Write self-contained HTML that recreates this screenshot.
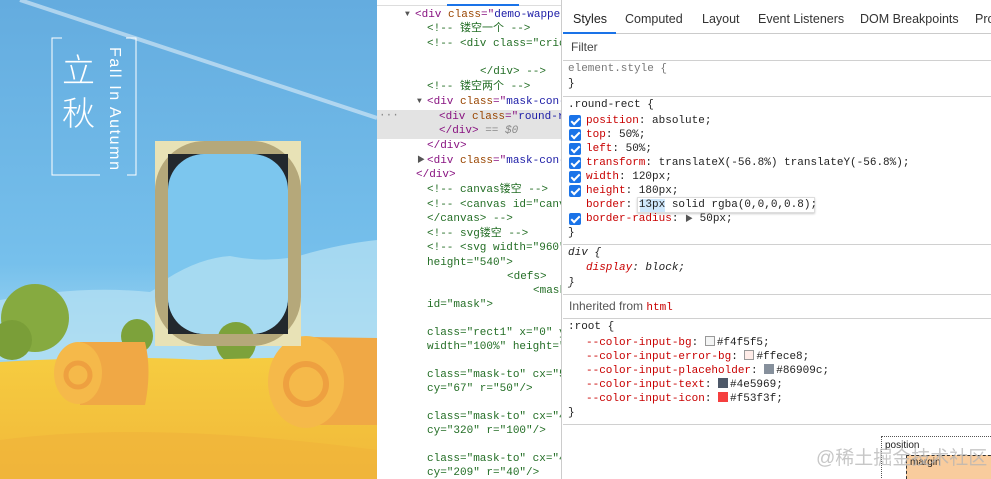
<!DOCTYPE html>
<html><head><meta charset="utf-8">
<style>
*{margin:0;padding:0;box-sizing:border-box}
body{width:991px;height:479px;overflow:hidden;background:#fff;position:relative;font-family:"Liberation Sans","Noto Sans CJK SC",sans-serif}
.mono{font-family:"Liberation Mono","Noto Sans CJK SC",monospace;font-size:11px}
#dom{position:absolute;left:377px;top:0;width:185px;height:479px;background:#fff;overflow:hidden;border-right:1px solid #ccc}
#dom .l{position:absolute;white-space:pre;line-height:14px;color:#236e25}
.tg{color:#881280}.at{color:#994500}.av{color:#1a1aa6}.cm{color:#236e25}
#sty{position:absolute;left:563px;top:0;width:428px;height:479px;background:#fff;overflow:hidden}
.tabs{position:absolute;top:6px;left:0;right:0;height:28px;border-bottom:1px solid #cbcbcb;font-size:12.5px;color:#333}
.tabs span{position:absolute;top:6px}
.sep{position:absolute;left:0;right:0;height:1px;background:#d0d0d0}
.sl{position:absolute;white-space:pre;line-height:14px;color:#222}
.p{color:#c80000}
.cb{position:absolute;left:6px;width:12px;height:12px;background:#1a73e8;border-radius:2px}
.cb:after{content:"";position:absolute;left:4px;top:1px;width:3px;height:7px;border:solid #fff;border-width:0 2px 2px 0;transform:rotate(45deg)}
.sw{display:inline-block;width:10px;height:10px;border:1px solid #999;vertical-align:-1px;margin-right:2px}
</style></head><body>
<svg width="377" height="479" style="position:absolute;left:0;top:0" viewBox="0 0 377 479">
<defs>
<linearGradient id="sky" x1="0" y1="0" x2="0" y2="1"><stop offset="0" stop-color="#64acdf"/><stop offset="0.55" stop-color="#76c0ec"/><stop offset="0.7" stop-color="#9ad4f0"/></linearGradient>
<linearGradient id="fld" x1="0" y1="0" x2="0" y2="1"><stop offset="0" stop-color="#f6cc40"/><stop offset="1" stop-color="#f1b83a"/></linearGradient>
<clipPath id="win"><rect x="168" y="154" width="120" height="180" rx="36"/></clipPath>
</defs>
<rect width="377" height="479" fill="url(#sky)"/>
<path d="M20 0 L377 118" stroke="#e0eef8" stroke-width="4" opacity=".6"/>
<path d="M0 300 Q80 285 150 292 Q220 250 280 262 Q330 245 377 240 L377 360 L0 360Z" fill="#b2dff2" opacity=".8"/>
<ellipse cx="35" cy="318" rx="34" ry="34" fill="#86aa40"/>
<ellipse cx="12" cy="340" rx="20" ry="20" fill="#7a9e38"/>
<ellipse cx="137" cy="336" rx="16" ry="17" fill="#7da23b"/>
<ellipse cx="236" cy="342" rx="20" ry="22" fill="#7da23b"/>
<path d="M0 362 Q120 355 200 360 Q300 356 377 358 L377 479 L0 479Z" fill="url(#fld)"/>
<path d="M0 440 Q150 420 377 450 L377 479 L0 479Z" fill="#f0b23a" opacity=".6"/>
<path d="M80 342 L145 342 Q152 370 145 405 L80 405Z" fill="#f0a845"/>
<ellipse cx="78" cy="373" rx="24" ry="31" fill="#f5b94a"/>
<circle cx="78" cy="375" r="12" fill="none" stroke="#eea040" stroke-width="5"/>
<path d="M310 337 L377 338 L377 425 L310 425Z" fill="#f0a845"/>
<ellipse cx="306" cy="382" rx="38" ry="46" fill="#f5b94a"/>
<circle cx="306" cy="384" r="20" fill="none" stroke="#eea040" stroke-width="6"/>
<rect x="155" y="141" width="146" height="205" fill="#e8e2b6"/>
<rect x="161.5" y="147.5" width="133" height="192" rx="43" fill="none" stroke="#b5a87a" stroke-width="13"/>
<rect x="168" y="154" width="120" height="180" fill="#23282d"/>
<g clip-path="url(#win)">
<rect x="168" y="154" width="120" height="180" fill="#7cc6ee"/>
<path d="M168 278 Q200 258 230 256 Q260 262 288 258 L288 334 L168 334Z" fill="#abdcf1" opacity=".9"/>
<ellipse cx="236" cy="338" rx="18" ry="16" fill="#7da23b"/>
</g>
<polyline points="62,38 52,38 52,175 100,175" fill="none" stroke="#fff" stroke-width="1"/>
<polyline points="126,38 136,38 136,175 127,175" fill="none" stroke="#fff" stroke-width="1"/>
<text x="62" y="82" font-size="33" fill="#fff" font-family="Noto Sans CJK SC,sans-serif" font-weight="300">立</text>
<text x="62" y="125" font-size="33" fill="#fff" font-family="Noto Sans CJK SC,sans-serif" font-weight="300">秋</text>
<text transform="translate(110,47) rotate(90)" font-size="16" fill="#fff" font-family="Liberation Sans,sans-serif" textLength="123" lengthAdjust="spacing">Fall In Autumn</text>
</svg>
<div id="dom" class="mono">
<div style="position:absolute;left:0;top:0;right:0;height:6px;border-bottom:1px solid #ddd"></div>
<div style="position:absolute;left:70px;top:4px;width:72px;height:2px;background:#1a73e8"></div>
<div style="position:absolute;left:0;top:110px;width:185px;height:29px;background:#e3e3e3"></div>
<div class="l" style="left:28px;top:8px;color:#555;font-size:8px">▼</div>
<div class="l" style="left:38px;top:8px"><span class="tg">&lt;div </span><span class="at">class</span><span class="tg">="</span><span class="av">demo-wappe</span></div>
<div class="l" style="left:50px;top:22px">&lt;!-- 镂空一个 --&gt;</div>
<div class="l" style="left:50px;top:37px">&lt;!-- &lt;div class="cric</div>
<div class="l" style="left:103px;top:65px">&lt;/div&gt; --&gt;</div>
<div class="l" style="left:50px;top:80px">&lt;!-- 镂空两个 --&gt;</div>
<div class="l" style="left:40px;top:95px;color:#555;font-size:8px">▼</div>
<div class="l" style="left:50px;top:95px"><span class="tg">&lt;div </span><span class="at">class</span><span class="tg">="</span><span class="av">mask-con-</span></div>
<div class="l" style="left:2px;top:109px;color:#888">···</div>
<div class="l" style="left:62px;top:110px"><span class="tg">&lt;div </span><span class="at">class</span><span class="tg">="</span><span class="av">round-r</span></div>
<div class="l" style="left:62px;top:124px"><span class="tg">&lt;/div&gt;</span><span style="color:#888"> == <i>$0</i></span></div>
<div class="l" style="left:50px;top:139px"><span class="tg">&lt;/div&gt;</span></div>
<div class="l" style="left:40px;top:154px;color:#555;font-size:8px">▶</div>
<div class="l" style="left:50px;top:154px"><span class="tg">&lt;div </span><span class="at">class</span><span class="tg">="</span><span class="av">mask-con-</span></div>
<div class="l" style="left:39px;top:168px"><span class="tg">&lt;/div&gt;</span></div>
<div class="l" style="left:50px;top:183px">&lt;!-- canvas镂空 --&gt;</div>
<div class="l" style="left:50px;top:198px">&lt;!-- &lt;canvas id="canv</div>
<div class="l" style="left:50px;top:212px">&lt;/canvas&gt; --&gt;</div>
<div class="l" style="left:50px;top:227px">&lt;!-- svg镂空 --&gt;</div>
<div class="l" style="left:50px;top:241px">&lt;!-- &lt;svg width="960"</div>
<div class="l" style="left:50px;top:256px">height="540"&gt;</div>
<div class="l" style="left:130px;top:270px">&lt;defs&gt;</div>
<div class="l" style="left:156px;top:284px">&lt;mask</div>
<div class="l" style="left:50px;top:298px">id="mask"&gt;</div>
<div class="l" style="left:50px;top:326px">class="rect1" x="0" y</div>
<div class="l" style="left:50px;top:340px">width="100%" height="</div>
<div class="l" style="left:50px;top:368px">class="mask-to" cx="5</div>
<div class="l" style="left:50px;top:382px">cy="67" r="50"/&gt;</div>
<div class="l" style="left:50px;top:410px">class="mask-to" cx="4</div>
<div class="l" style="left:50px;top:424px">cy="320" r="100"/&gt;</div>
<div class="l" style="left:50px;top:452px">class="mask-to" cx="4</div>
<div class="l" style="left:50px;top:466px">cy="209" r="40"/&gt;</div>
</div>
<div id="sty">
<div class="tabs">
<span style="left:10px;color:#222">Styles</span>
<span style="left:62px">Computed</span>
<span style="left:139px">Layout</span>
<span style="left:195px">Event Listeners</span>
<span style="left:297px">DOM Breakpoints</span>
<span style="left:412px">Pro</span>
<div style="position:absolute;left:0;bottom:-1px;width:53px;height:2px;background:#1a73e8"></div>
</div>
<div style="position:absolute;left:8px;top:40px;font-size:12px;color:#444">Filter</div>
<div class="sep" style="top:60px"></div>
<div class="mono">
<div class="sl" style="left:5px;top:62px;color:#777">element.style {</div>
<div class="sl" style="left:5px;top:77px">}</div>
<div class="sep" style="top:96px"></div>
<div class="sl" style="left:5px;top:98px">.round-rect {</div>
<div class="cb" style="top:115px"></div><div class="sl" style="left:23px;top:114px"><span class="p">position</span>: absolute;</div>
<div class="cb" style="top:129px"></div><div class="sl" style="left:23px;top:128px"><span class="p">top</span>: 50%;</div>
<div class="cb" style="top:143px"></div><div class="sl" style="left:23px;top:142px"><span class="p">left</span>: 50%;</div>
<div class="cb" style="top:157px"></div><div class="sl" style="left:23px;top:156px"><span class="p">transform</span>: translateX(-56.8%) translateY(-56.8%);</div>
<div class="cb" style="top:171px"></div><div class="sl" style="left:23px;top:170px"><span class="p">width</span>: 120px;</div>
<div class="cb" style="top:185px"></div><div class="sl" style="left:23px;top:184px"><span class="p">height</span>: 180px;</div>
<div style="position:absolute;left:74px;top:197px;width:178px;height:16px;border:1px solid #ddd;box-shadow:0 1px 2px #ccc"></div>
<div style="position:absolute;left:77px;top:199px;width:25px;height:13px;background:#cfe8fc"></div>
<div class="sl" style="left:23px;top:198px"><span class="p">border</span>: 13px solid rgba(0,0,0,0.8);</div>
<div class="cb" style="top:213px"></div><div class="sl" style="left:23px;top:212px"><span class="p">border-radius</span>: <span style="font-size:8px;color:#555">▶</span> 50px;</div>
<div class="sl" style="left:5px;top:226px">}</div>
<div class="sep" style="top:244px"></div>
<div class="sl" style="left:5px;top:246px;font-style:italic">div {</div>
<div class="sl" style="left:23px;top:261px;font-style:italic"><span class="p">display</span>: block;</div>
<div class="sl" style="left:5px;top:276px;font-style:italic">}</div>
<div class="sep" style="top:294px"></div>
<div class="sl" style="left:6px;top:299px;font-family:'Liberation Sans',sans-serif;font-size:12px;color:#555">Inherited from <span class="p" style="font-family:'Liberation Mono',monospace;font-size:11px">html</span></div>
<div class="sep" style="top:318px"></div>
<div class="sl" style="left:5px;top:320px">:root {</div>
<div class="sl" style="left:23px;top:336px"><span class="p">--color-input-bg</span>: <span class="sw" style="background:#f4f5f5"></span>#f4f5f5;</div>
<div class="sl" style="left:23px;top:350px"><span class="p">--color-input-error-bg</span>: <span class="sw" style="background:#ffece8"></span>#ffece8;</div>
<div class="sl" style="left:23px;top:364px"><span class="p">--color-input-placeholder</span>: <span class="sw" style="background:#86909c;border-color:#86909c"></span>#86909c;</div>
<div class="sl" style="left:23px;top:378px"><span class="p">--color-input-text</span>: <span class="sw" style="background:#4e5969;border-color:#4e5969"></span>#4e5969;</div>
<div class="sl" style="left:23px;top:392px"><span class="p">--color-input-icon</span>: <span class="sw" style="background:#f53f3f;border-color:#f53f3f"></span>#f53f3f;</div>
<div class="sl" style="left:5px;top:406px">}</div>
</div>
<div class="sep" style="top:424px"></div>
<div style="position:absolute;left:318px;top:436px;width:120px;height:50px;border:1px dotted #555"></div>
<div style="position:absolute;left:322px;top:440px;font-size:10px;color:#222">position</div>
<div style="position:absolute;left:343px;top:455px;width:90px;height:40px;background:#f9cc9d;border:1px dashed #333"></div>
<div style="position:absolute;left:347px;top:457px;font-size:10px;color:#222">margin</div>
<div style="position:absolute;left:253px;top:443px;font-size:19px;color:rgba(180,180,180,.75)">@稀土掘金技术社区</div>
</div>
</body></html>
